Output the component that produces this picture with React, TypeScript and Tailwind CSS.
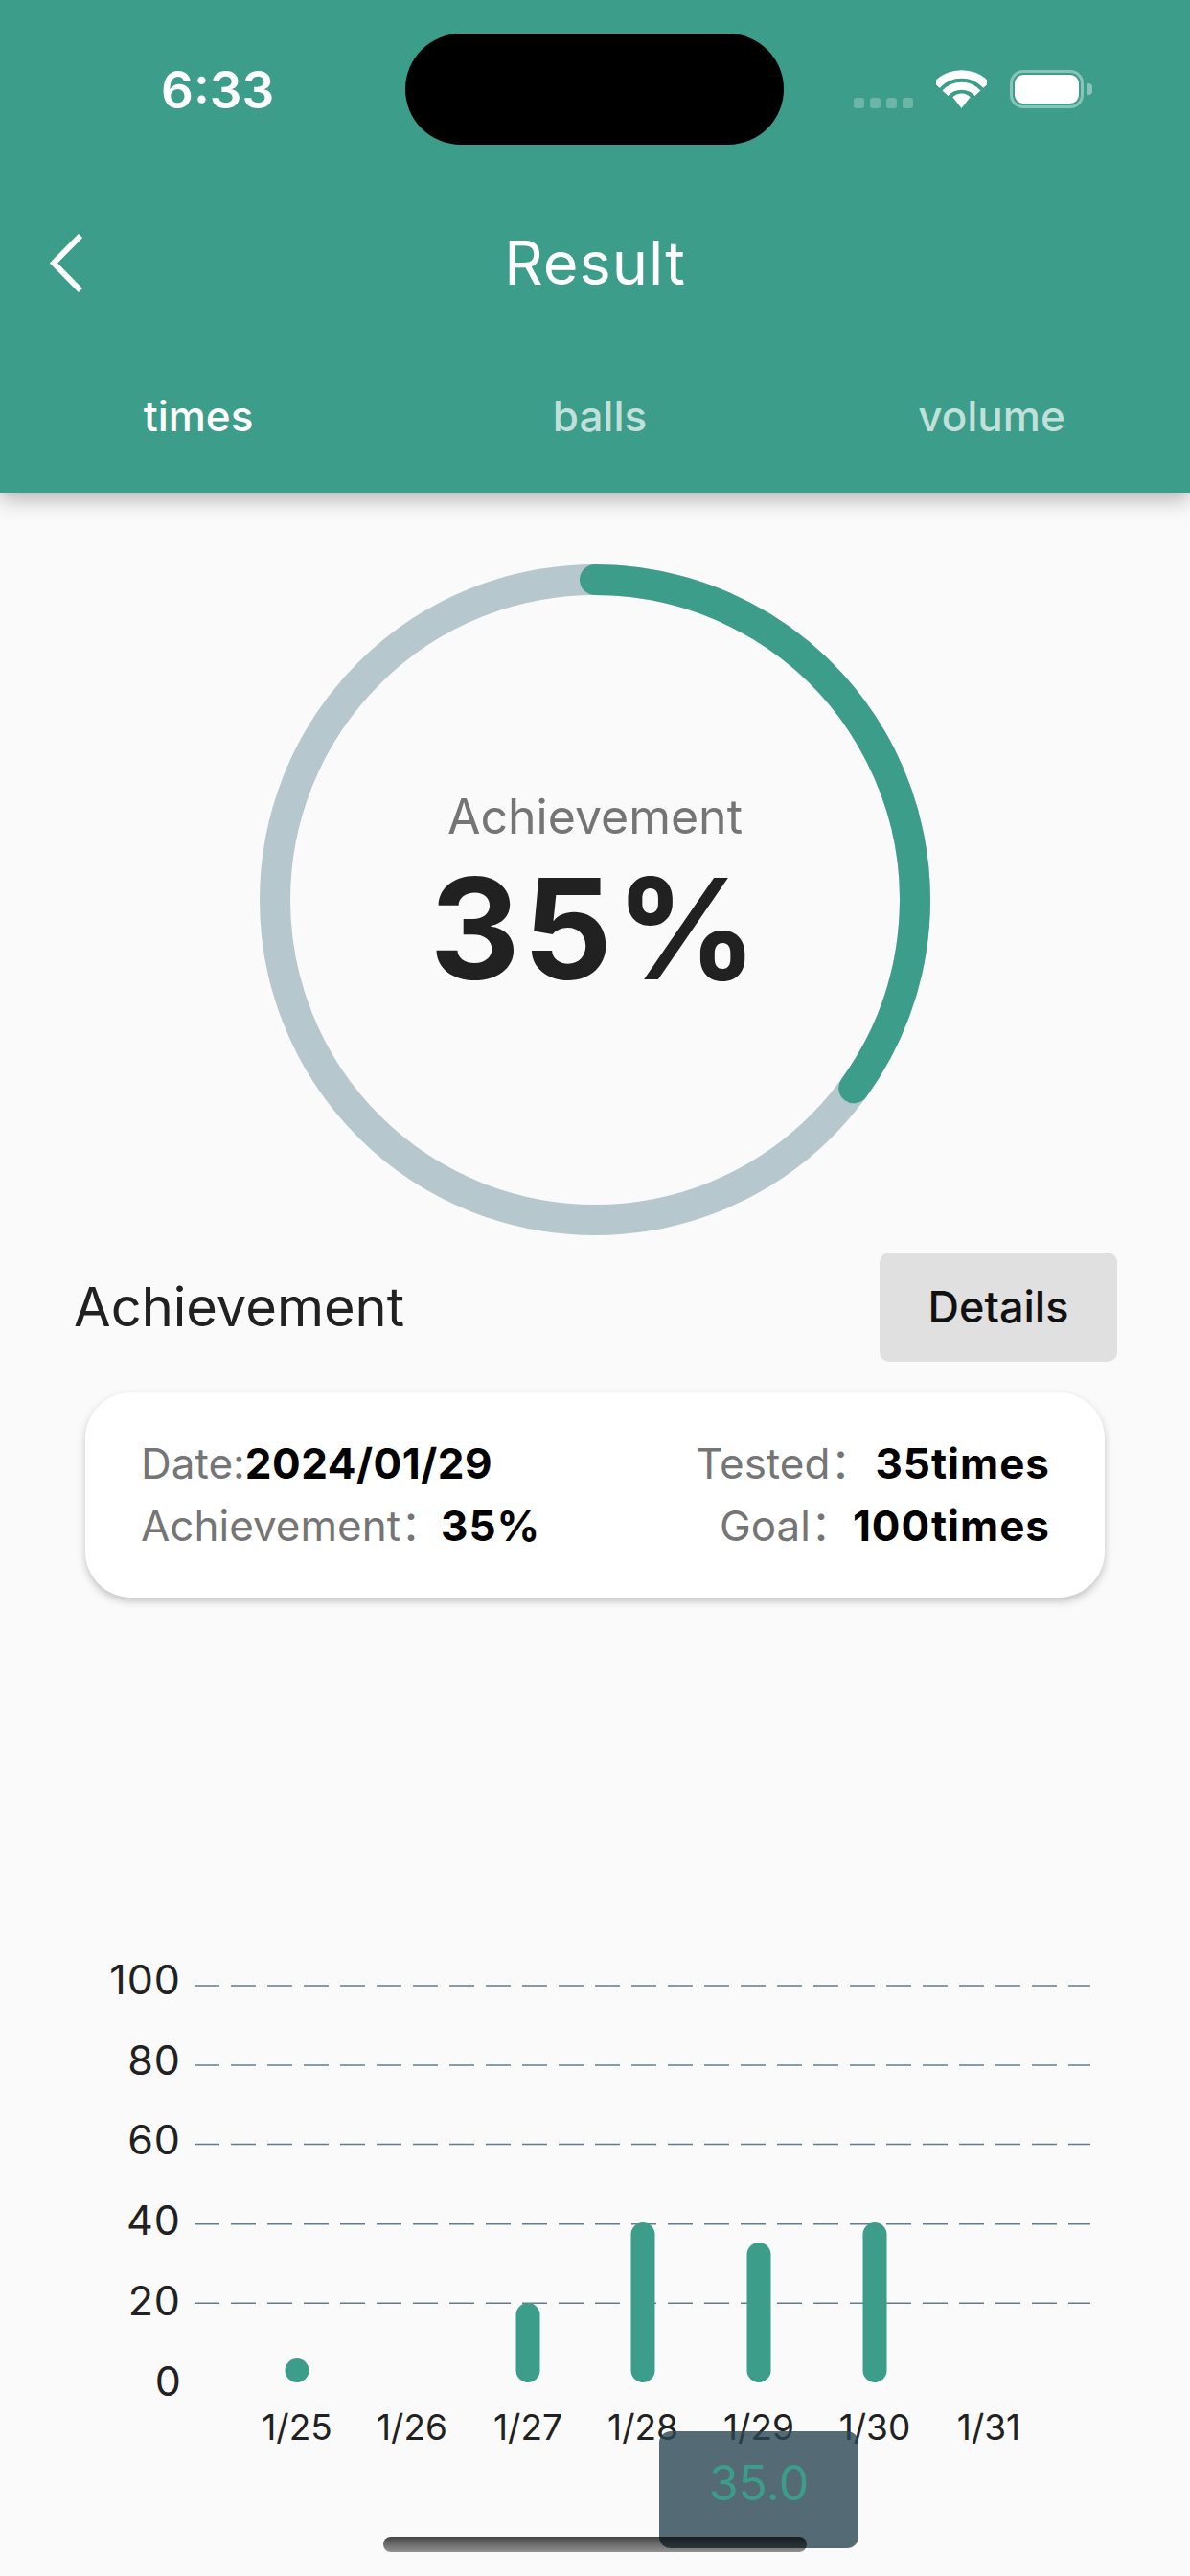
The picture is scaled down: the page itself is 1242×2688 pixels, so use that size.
import React from "react";

const FONT = "font-['Inter','Noto_Sans_CJK_SC',sans-serif]";

const GRID = [
  { label: "100", y: 32, text: 41 },
  { label: "80", y: 115, text: 125 },
  { label: "60", y: 197.5, text: 208 },
  { label: "40", y: 280.75, text: 292 },
  { label: "20", y: 363.25, text: 376 },
];

const DAYS = [
  { label: "1/25", x: 310, top: 421 },
  { label: "1/26", x: 430, top: null },
  { label: "1/27", x: 551, top: 363 },
  { label: "1/28", x: 671, top: 279 },
  { label: "1/29", x: 792, top: 300 },
  { label: "1/30", x: 913, top: 279 },
  { label: "1/31", x: 1032, top: null },
];

function Wifi() {
  return (
    <svg width="53" height="40" viewBox="0 0 53 40" fill="none">
      <path d="M0.5 15.8 A35.5 35.5 0 0 1 52.5 15.8" stroke="#fff" strokeWidth="8.5" />
      <path d="M9.5 24.2 A23 23 0 0 1 43.5 24.2" stroke="#fff" strokeWidth="8" />
      <path d="M17.3 28.3 A13 13 0 0 1 35.7 28.3 L26.5 40 Z" fill="#fff" />
    </svg>
  );
}

function Battery() {
  return (
    <div className="flex items-center gap-[4px]">
      <div className="w-[77px] h-[40px] rounded-[14px] border-[3px] border-white/40 p-[2px]">
        <div className="w-full h-full rounded-[9px] bg-white" />
      </div>
      <div className="w-[5px] h-[12px] rounded-r-[4px] bg-white/40" />
    </div>
  );
}

function StatusBar() {
  return (
    <div className="flex h-[116px] mt-[35px] items-center">
      <div className="w-[423px] pl-[168px] text-[53px] leading-none font-semibold text-white pt-[2px]">6:33</div>
      <div className="w-[395px] h-[116px] rounded-[58px] bg-black" />
      <div className="flex-1 flex items-end pl-[73px] h-[40px] mt-[-1px]">
        <div className="flex gap-[6px] mb-0">
          {[0, 1, 2, 3].map((d) => (
            <div key={d} className="w-[11px] h-[11px] rounded-[3px] bg-white/25" />
          ))}
        </div>
        <div className="ml-[24px]"><Wifi /></div>
        <div className="ml-[24px]"><Battery /></div>
      </div>
    </div>
  );
}

function Ring() {
  return (
    <div className="relative w-[700px] h-[700px]">
      <svg width="700" height="700" viewBox="0 0 700 700" fill="none">
        <circle cx="350" cy="350" r="334" stroke="#b6c7cd" strokeWidth="32" />
        <path d="M350 16 A334 334 0 0 1 620.2 546.3" stroke="#3c9d8a" strokeWidth="32" strokeLinecap="round" />
      </svg>
      <div className="absolute inset-0 flex flex-col items-center pt-[233px]">
        <div className="text-[50px] leading-[60px] text-[#757575]">Achievement</div>
        <div className="text-[146px] leading-[160px] font-bold tracking-[3px] mt-[7px] text-[#212121]">35%</div>
      </div>
    </div>
  );
}

function Chart() {
  return (
    <svg width="1242" height="520" viewBox="0 0 1242 520" className="block" fill="none">
      {GRID.map((g) => (
        <g key={g.label}>
          <line x1="203" x2="1138" y1={g.y} y2={g.y} stroke="#607d8b" strokeWidth="1.5" strokeDasharray="26 12" />
          <text x="189" y={g.text} textAnchor="end" fontSize="43" letterSpacing="1" fill="#212121" fontFamily="Inter">{g.label}</text>
        </g>
      ))}
      <text x="189" y="460" textAnchor="end" fontSize="43" fill="#212121" fontFamily="Inter">0</text>
      {DAYS.map((d) => (
        <g key={d.label}>
          {d.top !== null && <rect x={d.x - 12.5} y={d.top} width="25" height={446 - d.top} rx="12.5" fill="#3c9d8a" />}
          <text x={d.x} y="506" textAnchor="middle" fontSize="37" fill="#212121" fontFamily="Inter">{d.label}</text>
        </g>
      ))}
    </svg>
  );
}

export default function App() {
  return (
    <div className={`relative w-[1242px] h-[2688px] overflow-hidden bg-[#fafafa] ${FONT}`}>
      <header className="relative h-[514px] bg-[#3c9d8a] shadow-[0_6px_22px_rgba(0,0,0,0.3)] flex flex-col">
        <StatusBar />
        <div className="relative mt-[71px] h-[104px] flex items-center justify-center">
          <svg width="40" height="65" viewBox="0 0 40 65" fill="none" className="absolute left-[49px] top-[20px]">
            <path d="M35 4 L7 32.5 L35 61" stroke="#fff" strokeWidth="6" />
          </svg>
          <div className="text-[63px] leading-none text-white font-normal tracking-[1px]">Result</div>
        </div>
        <div className="grid grid-cols-3 mt-[78px] text-[44px] leading-[60px] text-center font-medium">
          <div className="text-white">times</div>
          <div className="text-white/70 pl-[10px]">balls</div>
          <div className="text-white/70">volume</div>
        </div>
      </header>

      <main className="flex flex-col">
        <div className="flex justify-center pt-[75px]"><Ring /></div>

        <div className="flex items-center justify-between mt-[18px] pl-[77px] pr-[76px] h-[114px]">
          <div className="text-[56px] leading-none text-[#212121]">Achievement</div>
          <div className="w-[248px] h-[114px] rounded-[10px] bg-[#e0e0e0] flex items-center justify-center text-[45px] font-medium text-[#111]">Details</div>
        </div>

        <div className="mx-[89px] mt-[32px] h-[214px] rounded-[48px] bg-white shadow-[0_4px_8px_rgba(0,0,0,0.22)] flex justify-between items-center pl-[58px] pr-[57px] text-[44px] leading-[65px] text-[#757575]">
          <div>
            <div>Date:<span className="font-bold text-black tracking-[0.5px]">2024/01/29</span></div>
            <div>Achievement：<span className="font-bold text-black tracking-[1px] ml-[-2px]">35%</span></div>
          </div>
          <div className="text-right">
            <div>Tested：<span className="font-bold text-black tracking-[1px] ml-[3px]">35times</span></div>
            <div>Goal：<span className="font-bold text-black tracking-[1px]">100times</span></div>
          </div>
        </div>

        <div className="mt-[373px]"><Chart /></div>
      </main>

      {/* value tooltip over the selected bar */}
      <div className="absolute left-[688px] top-[2537px] w-[208px] h-[122px] rounded-[12px] bg-[rgba(42,70,84,0.8)] flex items-center justify-center pb-[14px] text-[50px] text-[#3c9d8a]">35.0</div>

      {/* home indicator */}
      <div className="absolute left-[400px] top-[2647px] w-[442px] h-[16px] rounded-full bg-gradient-to-b from-[rgba(0,0,0,0.72)] to-[rgba(0,0,0,0.42)]" />
    </div>
  );
}
